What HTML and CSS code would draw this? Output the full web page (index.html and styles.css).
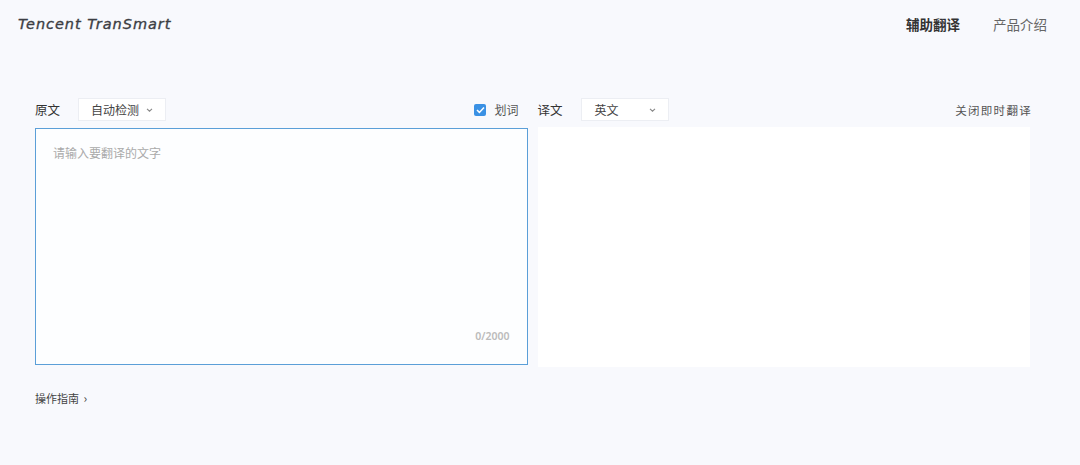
FILE: index.html
```html
<!DOCTYPE html>
<html lang="zh-CN">
<head>
  <meta charset="UTF-8" />
  <meta name="viewport" content="width=device-width, initial-scale=1.0" />
  <title>Tencent TranSmart</title>
  <link rel="stylesheet" href="styles.css">
</head>
<body>
  <header class="topbar">
    <div class="logo">Tencent TranSmart</div>
    <nav class="nav">
      <a class="nav-item active">辅助翻译</a>
      <a class="nav-item">产品介绍</a>
    </nav>
  </header>

  <main class="workspace">
    <section class="col">
      <div class="toolbar">
        <span class="label">原文</span>
        <div class="select src-select">
          <span>自动检测</span>
          <svg class="chev" width="7" height="4" viewBox="0 0 7 4"><path d="M1 .8l2.5 2.4L6 .8" fill="none" stroke="#888" stroke-width="1.1"/></svg>
        </div>
        <label class="pick">
          <span class="check">
            <svg width="9" height="8" viewBox="0 0 9 8"><path d="M1 4l2.4 2.4L8 1.5" fill="none" stroke="#fff" stroke-width="1.5"/></svg>
          </span>
          划词
        </label>
      </div>
      <div class="source-box">
        <div class="placeholder">请输入要翻译的文字</div>
        <div class="counter">0/2000</div>
      </div>
    </section>

    <section class="col">
      <div class="toolbar">
        <span class="label">译文</span>
        <div class="select tgt-select">
          <span>英文</span>
          <svg class="chev" width="7" height="4" viewBox="0 0 7 4"><path d="M1 .8l2.5 2.4L6 .8" fill="none" stroke="#888" stroke-width="1.1"/></svg>
        </div>
        <span class="toggle">关闭即时翻译</span>
      </div>
      <div class="target-box"></div>
    </section>
  </main>

  <div class="guide">操作指南 <span class="arrow">›</span></div>
</body>
</html>
```

FILE: styles.css
```css
body {
  margin: 0;
  background-color: #f8f9fd;
  color: #333;
  font-family: "Noto Sans CJK SC", "Noto Sans", sans-serif;
  height: 465px;
  overflow: hidden;
}
.topbar {
  display: flex;
  align-items: center;
  justify-content: space-between;
  height: 48px;
  padding: 0 33px 0 18px;
}
.logo {
  font-family: "DejaVu Sans", sans-serif;
  font-style: italic;
  font-size: 14.5px;
  letter-spacing: 0.95px;
  color: #3c3e44;
  -webkit-text-stroke: 0.35px #3c3e44;
}
.nav {
  display: flex;
  gap: 33px;
}
.nav-item {
  font-size: 13.5px;
  color: #666;
}
.nav-item.active {
  color: #333;
  font-weight: bold;
}
.workspace {
  display: flex;
  gap: 10px;
  padding: 50px 0 0 35px;
  width: 995px;
}
.col {
  flex: 1;
  display: flex;
  flex-direction: column;
}
.toolbar {
  display: flex;
  align-items: center;
  height: 23px;
  margin-bottom: 7px;
  font-size: 12.5px;
}
.label {
  color: #333;
  margin-right: 18px;
}
.select {
  display: flex;
  align-items: center;
  justify-content: space-between;
  box-sizing: border-box;
  width: 88px;
  height: 23px;
  background: #fff;
  border: 1px solid #eceef3;
  padding: 0 12px 0 12px;
  color: #444;
  font-size: 12px;
}
.tgt-select span {
  margin-left: 1px;
}
.chev {
  flex: none;
}
.pick {
  margin-left: auto;
  margin-right: 9px;
  display: flex;
  align-items: center;
  gap: 8px;
  color: #555;
  font-size: 12px;
}
.check {
  width: 12px;
  height: 12px;
  border-radius: 2px;
  background: #3a91e4;
  display: flex;
  align-items: center;
  justify-content: center;
}
.toggle {
  margin-left: auto;
  font-size: 11.5px;
  letter-spacing: 1.3px;
  color: #555;
  margin-right: -2px;
}
.source-box {
  position: relative;
  box-sizing: border-box;
  height: 237px;
  background: #fdfeff;
  border: 1px solid #5b9fd8;
  padding: 15px 17px;
}
.placeholder {
  font-size: 12px;
  color: #aaa;
}
.counter {
  position: absolute;
  right: 17px;
  bottom: 21px;
  font-family: "Noto Sans", sans-serif;
  font-size: 10.5px;
  font-weight: 600;
  color: #bbb;
}
.target-box {
  height: 240px;
  margin-top: -1px;
  background: #fff;
}
.guide {
  margin: 22px 0 0 35px;
  font-size: 11px;
  color: #444;
}
.arrow {
  font-size: 12px;
  margin-left: 2px;
}
```
